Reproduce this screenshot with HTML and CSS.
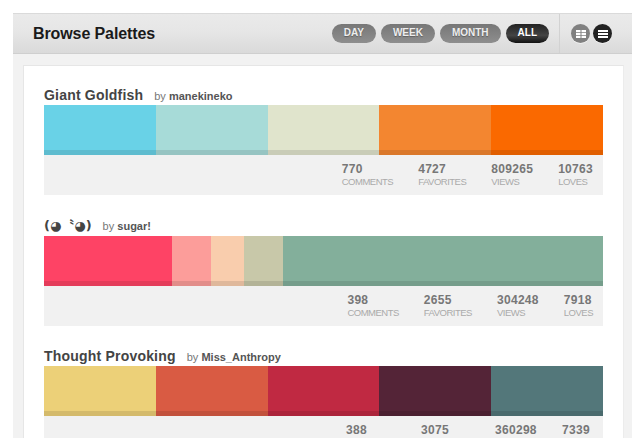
FILE: index.html
```html
<!DOCTYPE html>
<html lang="en">
	<head>
		<meta charset="UTF-8" />
		<title>Browse Palettes</title>
		<link rel="stylesheet" href="styles.css">
	</head>
	<body>
		<div class="page">
			<div class="header">
				<h1>Browse Palettes</h1>
				<div class="filters">
					<span class="pill">DAY</span>
					<span class="pill">WEEK</span>
					<span class="pill">MONTH</span>
					<span class="pill active">ALL</span>
				</div>
				<div class="views">
					<span class="view">
						<svg width="10" height="8" viewBox="0 0 10 8"><path d="M0 0h4.5v2.2H0zM5.5 0H10v2.2H5.5zM0 2.9h4.5v2.2H0zM5.5 2.9H10v2.2H5.5zM0 5.8h4.5V8H0zM5.5 5.8H10V8H5.5z" fill="#fff"/></svg>
					</span>
					<span class="view active">
						<svg width="10" height="8" viewBox="0 0 10 8"><path d="M0 0h10v2H0zM0 3h10v2H0zM0 6h10v2H0z" fill="#fff"/></svg>
					</span>
				</div>
			</div>

			<div class="card">
				<div class="palette">
					<div class="title"><b>Giant Goldfish</b><span>by <em>manekineko</em></span></div>
					<div class="bar">
						<i style="width:20%;background:#69d2e7"></i>
						<i style="width:20%;background:#a7dbd8"></i>
						<i style="width:20%;background:#e0e4cc"></i>
						<i style="width:20%;background:#f38630"></i>
						<i style="width:20%;background:#fa6900"></i>
					</div>
					<div class="stats">
						<div class="stat">770<small>Comments</small></div>
						<div class="stat">4727<small>Favorites</small></div>
						<div class="stat">809265<small>Views</small></div>
						<div class="stat">10763<small>Loves</small></div>
					</div>
				</div>

				<div class="palette">
					<div class="title"><b class="kao">(◕<u>〝</u>◕)</b><span>by <em>sugar!</em></span></div>
					<div class="bar">
						<i style="width:22.9%;background:#fe4365"></i>
						<i style="width:7%;background:#fc9d9a"></i>
						<i style="width:5.9%;background:#f9cdad"></i>
						<i style="width:7%;background:#c8c8a9"></i>
						<i style="width:57.2%;background:#83af9b"></i>
					</div>
					<div class="stats">
						<div class="stat">398<small>Comments</small></div>
						<div class="stat">2655<small>Favorites</small></div>
						<div class="stat">304248<small>Views</small></div>
						<div class="stat">7918<small>Loves</small></div>
					</div>
				</div>

				<div class="palette">
					<div class="title"><b>Thought Provoking</b><span>by <em>Miss_Anthropy</em></span></div>
					<div class="bar">
						<i style="width:20%;background:#ecd078"></i>
						<i style="width:20%;background:#d95b43"></i>
						<i style="width:20%;background:#c02942"></i>
						<i style="width:20%;background:#542437"></i>
						<i style="width:20%;background:#53777a"></i>
					</div>
					<div class="stats">
						<div class="stat col-comments">388</div>
						<div class="stat col-favorites">3075</div>
						<div class="stat col-views">360298</div>
						<div class="stat col-loves">7339</div>
					</div>
				</div>
			</div>
		</div>
	</body>
</html>
```

FILE: styles.css
```css
html,
body {
	margin: 0;
	padding: 0;
	height: 438px;
	overflow: hidden;
	background: #fff;
	font-family: "Liberation Sans", Arial, sans-serif;
}
.page {
	margin: 13px 8px 0 13px;
	background: #f2f2f2;
}
.header {
	height: 39px;
	display: flex;
	align-items: center;
	padding-left: 20px;
	border-top: 1px solid #dadada;
	border-bottom: 1px solid #cfcfcf;
	background: linear-gradient(#eaeaea, #e6e6e6 45%, #dadada);
}
h1 {
	margin: 0;
	flex: 1;
	font-size: 16px;
	font-weight: bold;
	letter-spacing: -.1px;
	color: #1a1a1a;
}
.filters {
	display: flex;
	gap: 5px;
	padding-right: 10px;
}
.pill {
	height: 19px;
	line-height: 18px;
	padding: 0 12px;
	border-radius: 10px;
	font-size: 10px;
	font-weight: bold;
	color: #eee;
	text-shadow: 0 1px 1px rgba(0, 0, 0, .3);
	background: linear-gradient(#777, #8e8e8e);
}
.pill.active {
	color: #fff;
	background: linear-gradient(#222, #444 60%, #111);
}
.views {
	align-self: stretch;
	display: flex;
	align-items: center;
	gap: 3px;
	width: 73px;
	padding-left: 11px;
	box-sizing: border-box;
	border-left: 1px solid #d2d2d2;
}
.view {
	width: 19px;
	height: 19px;
	border-radius: 50%;
	display: flex;
	align-items: center;
	justify-content: center;
	background: #808080;
	box-shadow: 0 1px 0 rgba(255, 255, 255, .5);
}
.view.active {
	background: #222;
}
.card {
	margin: 11px 8px 0 10px;
	padding: 19px 20px 0;
	background: #fff;
	border: 1px solid #e6e6e6;
	border-right-color: #ececec;
	border-bottom: 0;
}
.palette {
	margin-bottom: 20.5px;
}
.palette:last-child {
	margin-bottom: 0;
}
.title {
	height: 20px;
	line-height: 20px;
	display: flex;
	align-items: baseline;
	gap: 11px;
}
.title b {
	font-size: 14px;
	letter-spacing: .2px;
	color: #444;
}
.title b.kao {
	font-family: "DejaVu Sans", sans-serif;
	font-size: 13px;
	letter-spacing: 0;
}
.title b.kao u {
	font-family: "Noto Sans CJK SC", sans-serif;
	font-size: 13px;
	line-height: 1;
	text-decoration: none;
}
.title span {
	font-size: 11px;
	color: #777;
}
.title em {
	font-style: normal;
	font-weight: bold;
	color: #555;
}
.bar {
	display: flex;
	height: 50px;
}
.bar i {
	display: block;
	box-shadow: inset 0 -5px 0 rgba(0, 0, 0, .1);
}
.stats {
	height: 40px;
	display: flex;
	justify-content: flex-end;
	gap: 25px;
	padding: 7px 10px 0 0;
	box-sizing: border-box;
	background: #f1f1f1;
}
.palette:last-child .stats {
	height: 22px;
}
.stat {
	font-size: 12px;
	font-weight: bold;
	letter-spacing: .3px;
	color: #777;
}
.stat small {
	display: block;
	font-size: 9.5px;
	font-weight: normal;
	letter-spacing: -.5px;
	text-transform: uppercase;
	color: #aaa;
}
/* last row has its labels below the fold, so the columns keep their width here */
.col-comments {
	width: 50px;
}
.col-favorites {
	width: 49px;
}
.col-views {
	width: 42px;
}
.col-loves {
	width: 31px;
}
```
